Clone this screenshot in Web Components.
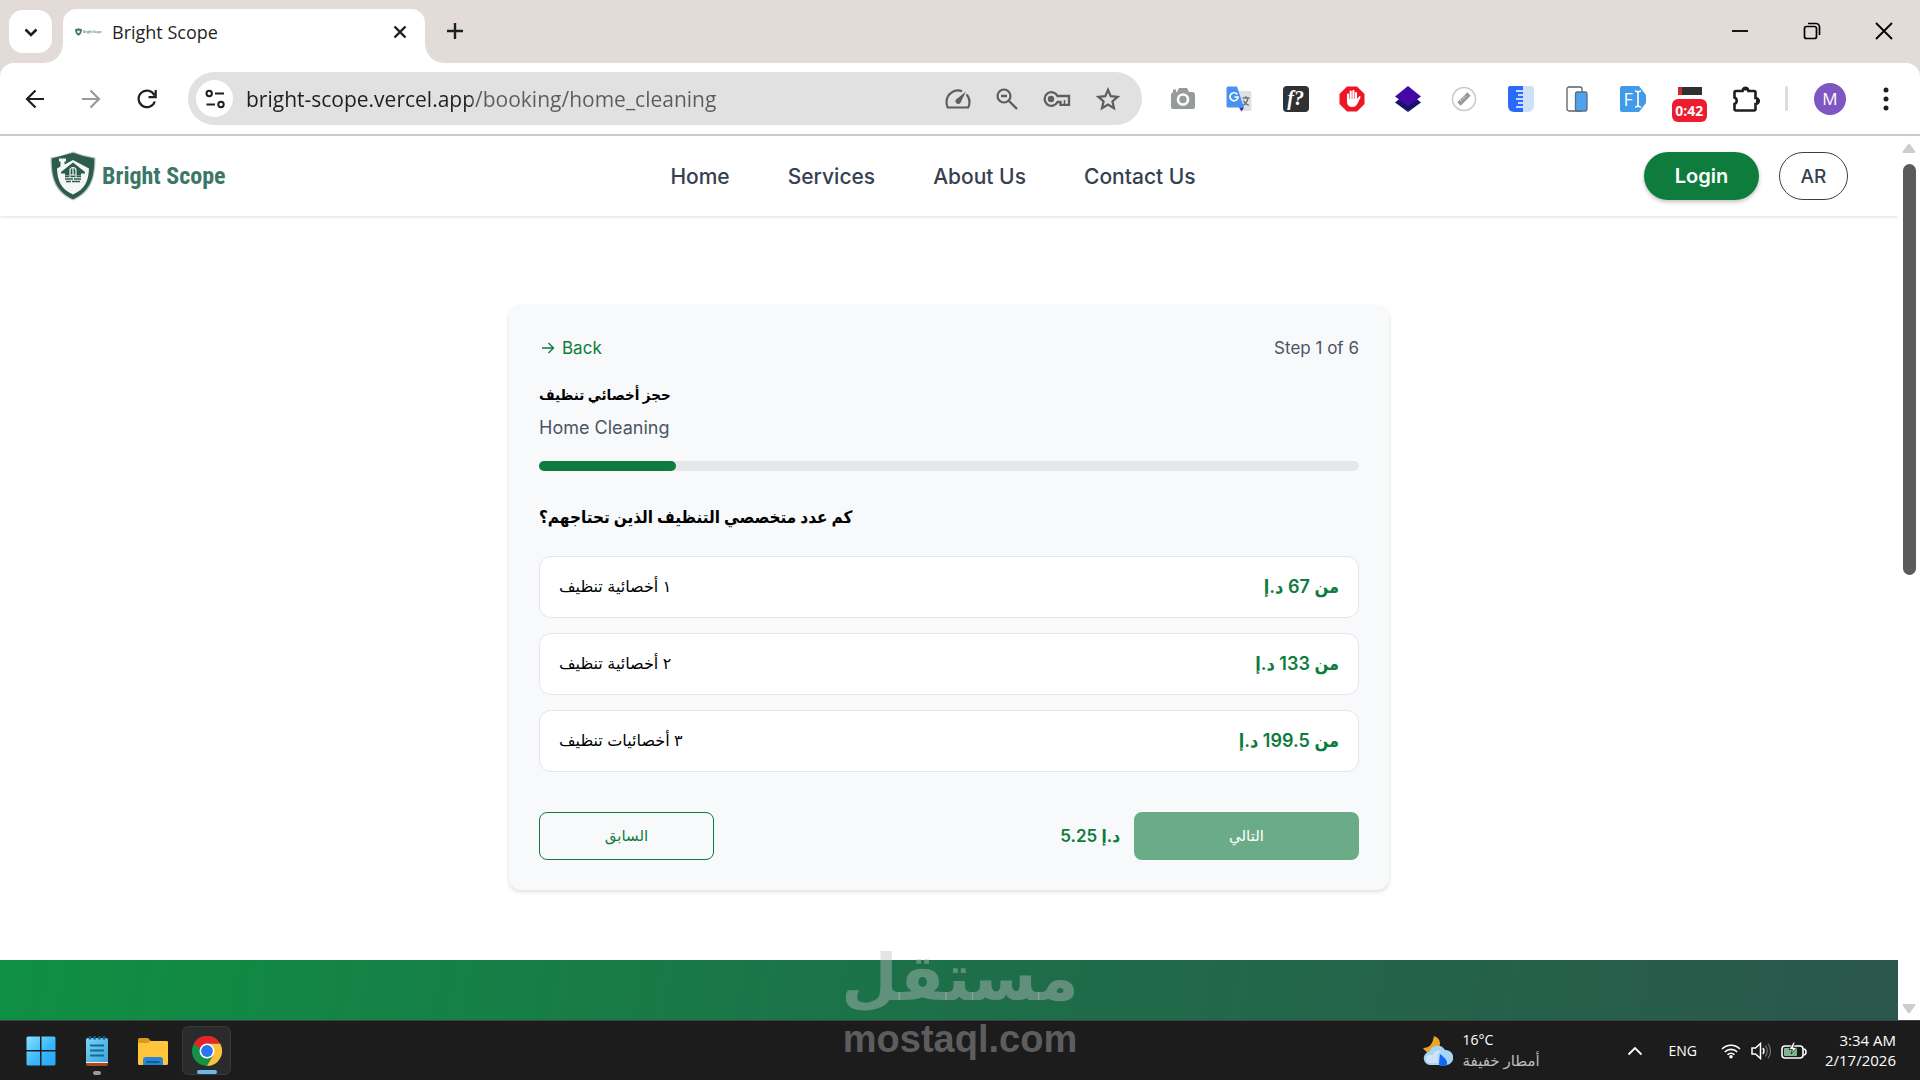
<!DOCTYPE html>
<html lang="en">
<head>
<meta charset="utf-8">
<title>Bright Scope</title>
<style>
  html, body { margin: 0; height: 100%; }
  body {
    --green: #0d7c3d; --ink: #1f1f1f; --frame: #e3dbd8;
    --ui: "Open Sans", "Noto Sans", "DejaVu Sans", sans-serif;
    --site: Inter, "DejaVu Sans", sans-serif;
    --narrow: Inter, "DejaVu Sans Condensed", "DejaVu Sans", sans-serif;
    font-family: var(--site); overflow: hidden; background: #fff;
  }
</style>
</head>
<body>
<desktop-screen></desktop-screen>
<script>
const define = (name, html) => {
  const t = document.createElement('template');
  t.innerHTML = `<style>*{box-sizing:border-box}button,input{font:inherit;color:inherit;margin:0;padding:0;border:0;background:none}button{cursor:pointer}a{color:inherit;text-decoration:none}</style>` + html;
  customElements.define(name, class extends HTMLElement {
    constructor() {
      super();
      this.attachShadow({ mode: 'open' }).append(t.content.cloneNode(true));
    }
  });
};

const ICONS = {
  chevron: ['0 0 20 20', '<path d="M4.500 7.500L10 13l5.500-5.500" fill="none" stroke="currentColor" stroke-width="2.600"/>'],
  close: ['0 0 20 20', '<path d="M4.500 4.500l11 11m0-11l-11 11" stroke="currentColor" stroke-width="2.400"/>'],
  plus: ['0 0 20 20', '<path d="M10 2v16M2 10h16" stroke="currentColor" stroke-width="2.400"/>'],
  min: ['0 0 18 18', '<path d="M1 9h16" stroke="currentColor" stroke-width="1.800"/>'],
  restore: ['0 0 18 18', '<rect x="1.500" y="4.500" width="12" height="12" rx="2" fill="none" stroke="currentColor" stroke-width="1.700"/><path d="M5 1.500h8a3.500 3.500 0 013.500 3.500v8" fill="none" stroke="currentColor" stroke-width="1.700"/>'],
  winclose: ['0 0 18 18', '<path d="M1 1l16 16m0-16L1 17" stroke="currentColor" stroke-width="1.800"/>'],
  back: ['0 0 20 20', '<path d="M19 10H2m8.500-8.500L2 10l8.500 8.500" fill="none" stroke="currentColor" stroke-width="2.200"/>'],
  forward: ['0 0 20 20', '<path d="M1 10h17m-8.500-8.500L18 10l-8.500 8.500" fill="none" stroke="currentColor" stroke-width="2.200"/>'],
  reload: ['0 0 20 20', '<path d="M17.800 12.500A8.300 8.300 0 1117.500 6.500M18.700 1v7.200h-7.200" fill="none" stroke="currentColor" stroke-width="2.200"/>'],
  tune: ['0 0 20 20', '<g fill="none" stroke="currentColor" stroke-width="2"><circle cx="4.200" cy="4.500" r="2.700"/><path d="M10 4.500h9M1.500 15.500h8.500"/><circle cx="16" cy="15.500" r="2.700"/></g>'],
  gauge: ['0 0 26 22', '<path d="M17 3.200A11.500 11.500 0 001.500 14q0 3 1.300 5.500h20.400Q24.500 17 24.500 14q0-4.500-3-7.500" fill="none" stroke="currentColor" stroke-width="2.200"/><path d="M21 3.500l-5.500 11.300a2.800 2.800 0 01-4.700-3z" fill="currentColor"/>'],
  zoomout: ['0 0 22 22', '<circle cx="8" cy="8" r="6.500" fill="none" stroke="currentColor" stroke-width="2.200"/><path d="M5 8h6M13 13l8 8" stroke="currentColor" stroke-width="2.400"/>'],
  key: ['0 0 28 16', '<path d="M14.500 5a6.800 6.800 0 100 6h3v2.800h8.500V5z" fill="none" stroke="currentColor" stroke-width="2.300"/><circle cx="8" cy="8" r="3.200" fill="currentColor"/><path d="M21.500 9v5" stroke="currentColor" stroke-width="1.600"/>'],
  star: ['0 0 24 24', '<path d="M12 2.800l2.700 6.400 6.900.600-5.200 4.500 1.600 6.800-6-3.600-6 3.600 1.600-6.800-5.200-4.500 6.900-.600z" fill="none" stroke="currentColor" stroke-width="2.200"/>'],
  camera: ['0 0 26 24', '<path d="M3 5h4l2-4h8l2 4h3a3 3 0 013 3v12a2 2 0 01-2 2H3a2 2 0 01-2-2V7z" fill="#969b9b"/><circle cx="13" cy="12.500" r="5" fill="none" stroke="#fff" stroke-width="2.600"/><path d="M3 2.500h3v3H3z" fill="#969b9b"/>'],
  translate: ['0 0 26 26', '<path d="M12 5h12a1.500 1.500 0 011.500 1.500v17A1.500 1.500 0 0124 25H16z" fill="#dfe1e4"/><path d="M2 .500h9l7 21H2A1.500 1.500 0 01.500 20V2A1.500 1.500 0 012 .500z" fill="#4b92f0"/><path d="M18 21.500h-5l2.500 4z" fill="#3426c9"/><path d="M11.300 8.500A4 4 0 1012 11H8.500" fill="none" stroke="#fff" stroke-width="1.700"/><path d="M16.500 12h7M20 10v2m2 0q-1 5-5 7.500m.500-5q2 4 5.500 5" fill="none" stroke="#6b7280" stroke-width="1.300"/>'],
  hand: ['0 0 26 26', '<path d="M8 .500h10L25.500 8v10L18 25.500H8L.500 18V8z" fill="#ee1527"/><path d="M9 15V8.500M11.700 13V5.500M14.400 13V5M17 13V7" stroke="#fff" stroke-width="2.100" stroke-linecap="round"/><path d="M8 13h10l2.500-3q1.500 0 1 1.500L18 18.500Q16.500 21 13.500 21C9.500 21 8 18.500 8 15.500z" fill="#fff"/>'],
  layers: ['0 0 28 28', '<path d="M14 7l13 10.500L14 27 1 17.500z" fill="#1a1363"/><path d="M14 1l13 10.500L14 21 1 11.500z" fill="#4508a8"/>'],
  ruler: ['0 0 26 26', '<circle cx="13" cy="13" r="11.500" fill="#fff" stroke="#c6cac9" stroke-width="1.500"/><path d="M8 18l10-10" stroke="#949a98" stroke-width="4.600"/><path d="M9 14l1.500 1.500m0-3L12 14m0-3l1.500 1.500m0-3L15 11" stroke="#fff" stroke-width=".700"/>'],
  scale: ['0 0 26 26', '<path d="M2 0h13v26H6a6 6 0 01-6-6V2a2 2 0 012-2z" fill="#2969fb"/><path d="M15 0h8a3 3 0 013 3v17a6 6 0 01-6 6h-5z" fill="#cfe1f8"/><path d="M8 5h7M10 9h5M8 13h7M10 17h5M8 21h7" stroke="#fff" stroke-width="1.500"/>'],
  device: ['0 0 22 26', '<rect x="1" y="1" width="15" height="24" rx="2" fill="#fff" stroke="#59606b" stroke-width="1.300"/><rect x="9.500" y="6" width="11.500" height="19" rx="2" fill="#4ea2ee" stroke="#596b80" stroke-width="1.300"/>'],
  font: ['0 0 26 26', '<path d="M2 0h17l7 9v8l-7 9H2a2 2 0 01-2-2V2a2 2 0 012-2z" fill="#419bea"/>'],
  puzzle: ['0 0 28 28', '<path d="M4 6h6.500a3 3 0 016 0H22a1.500 1.500 0 011.500 1.500v5.500a3 3 0 010 6v5A1.500 1.500 0 0122 25.500H4A1.500 1.500 0 012.500 24v-5a3.500 3.500 0 000-6.500v-5A1.500 1.500 0 014 6z" fill="none" stroke="currentColor" stroke-width="2.600"/><path d="M10.500 5a3 3 0 016 0zM24.500 13a3 3 0 010 6z" fill="currentColor" stroke="currentColor"/>'],
  dots: ['0 0 6 24', '<g fill="currentColor"><circle cx="3" cy="3" r="2.500"/><circle cx="3" cy="12" r="2.500"/><circle cx="3" cy="21" r="2.500"/></g>'],
  shield: ['0 0 46 50', '<path d="M23 .500Q34 5 45.500 6.500C46 27 41 42 23 49.500 5 42 0 27 .500 6.500 12 5 23 .500 23 .500z" fill="#b9c6c0"/><path d="M23 1.800Q34 6 44.300 7.500C44.500 27 40 40.500 23 48.200 6 40.500 1.500 27 1.700 7.500 12 6 23 1.800z" fill="#2c5c4e"/><path d="M9 7.500h7v3h-1.500v3L23 9l16 8.500C38.500 30 35 38 23 43.500 11 38 7.500 30 7 17.500l3.500-2v-5H9z" fill="#f4f7f5"/><path d="M23 11.500L11 21v1.500h4v2h16v-2h4V21z" fill="#2c5c4e"/><path d="M20 24v-4.500a3 3 0 016 0V24zM23 16.500V24" fill="#2c5c4e" stroke="#f4f7f5" stroke-width="1.200"/><path d="M15 25.500h4.500m1 0h5m1 0H31M15 28h8m1 0h7M16 30.500h5m1 0h8" stroke="#2c5c4e" stroke-width="1.700"/>'],
  arrow: ['0 0 16 16', '<path d="M3 8h11.500M9.500 3L14.500 8l-5 5" fill="none" stroke="currentColor" stroke-width="1.400"/>'],
  up: ['0 0 14 10', '<path d="M7 1.500l5.500 7.500h-11z" fill="#cdcdcd" stroke="#cdcdcd" stroke-width="2" stroke-linejoin="round"/>'],
  down: ['0 0 14 10', '<path d="M7 8.500L12.500 1h-11z" fill="#cdcdcd" stroke="#cdcdcd" stroke-width="2" stroke-linejoin="round"/>'],
  windows: ['0 0 30 30', '<linearGradient id="w" x2="1" y2="1"><stop stop-color="#86e0ff"/><stop offset=".6" stop-color="#35b5fb"/><stop offset="1" stop-color="#2ba4f5"/></linearGradient><path d="M2 .500h12v13.500H.500V2A1.500 1.500 0 012 .500zM15.500 .500H28A1.500 1.500 0 0129.500 2v12h-14zM.500 15.500H14v14H2A1.500 1.500 0 01.500 28zM15.500 15.500h14V28a1.500 1.500 0 01-1.500 1.500H15.500z" fill="url(#w)"/>'],
  notepad: ['0 0 22 30', '<linearGradient id="n" x2="1" y2="1"><stop stop-color="#7bd4f5"/><stop offset="1" stop-color="#3ba3dd"/></linearGradient><path d="M0 25h22v3a2 2 0 01-2 2H2a2 2 0 01-2-2z" fill="#a84a18"/><path d="M0 24h22v3H0z" fill="#f3efe9"/><path d="M1.500 2h19A1.500 1.500 0 0122 3.500V26H0V3.500A1.500 1.500 0 011.500 2z" fill="url(#n)"/><path d="M4 9.500h14M4 14.500h14M4 19.500h14" stroke="#0d6f92" stroke-width="2.200"/><path d="M4 0v3.500M8.700 0v3.500M13.400 0v3.500M18 0v3.500" stroke="#125c84" stroke-width="2.400"/>'],
  folder: ['0 0 30 28', '<path d="M1.500 1H10l3 3h15.500A1.500 1.500 0 0130 5.500V15H0V2.500A1.500 1.500 0 011.500 1z" fill="#dd9720"/><path d="M0 6h10l3-2h15.500A1.500 1.500 0 0130 5.500v21a1.500 1.500 0 01-1.500 1.500h-27A1.500 1.500 0 010 26.500z" fill="#ffc63b"/><path d="M5 28v-5a3 3 0 013-3h14a3 3 0 013 3v5z" fill="#2587d1"/><path d="M8.500 24h13v2h-13z" fill="#1159a2"/>'],
  chrome: ['0 0 30 30', '<circle cx="15" cy="15" r="15" fill="#159246"/><path d="M2 7.500A15 15 0 0128 7.500H15L9 18z" fill="#e52527"/><path d="M28 7.500A15 15 0 0115 30l6.500-11.300L15 7.500z" fill="#fdc23c"/><path d="M2 7.500l6.500 11.200L15 15z" fill="#159246"/><path d="M2 7.500A15 15 0 0128 7.500H15a7.500 7.500 0 00-7 5z" fill="#e52527"/><circle cx="15" cy="15" r="7.500" fill="#fff"/><circle cx="15" cy="15" r="5.900" fill="#2b76f0"/>'],
  weather: ['0 0 30 30', '<path d="M11 0q8 3 5.500 11L8 17Q3 17 0 12q9 1 11-12z" fill="#eda327"/><path d="M7 29a6.800 6.800 0 01-.500-13.500A8.500 8.500 0 0122 14a7.500 7.500 0 011.500 15z" fill="#a7d3f5"/><path d="M6 27q-4-2-3-6 2-3 7-2 2-6 8-4-4 1-3 12z" fill="#cbe4f8"/><path d="M17 18q7 5 7 9a4 4 0 01-8 0z" fill="#1468ef"/>'],
  caret: ['0 0 16 10', '<path d="M1.500 8.500L8 2l6.500 6.500" fill="none" stroke="#fff" stroke-width="1.800"/>'],
  wifi: ['0 0 20 16', '<g fill="none" stroke="#fff" stroke-width="1.600"><path d="M1 6a12.700 12.700 0 0118 0M3.800 9a8.700 8.700 0 0112.400 0M6.500 11.800a5 5 0 017 0"/></g><circle cx="10" cy="13.800" r="1.800" fill="#fff"/>'],
  volume: ['0 0 20 18', '<path d="M1 6h3.500L9.500 1.500v15L4.500 12H1z" fill="none" stroke="#fff" stroke-width="1.500"/><path d="M12 6q2 3 0 6" fill="none" stroke="#fff" stroke-width="1.500"/><path d="M14.300 3.500q4 5.500 0 11M17 1.500q5 7.500 0 15" fill="none" stroke="#6b6b6b" stroke-width="1.300"/>'],
  battery: ['0 0 26 18', '<rect x="1" y="4" width="21" height="12" rx="3" fill="none" stroke="#fff" stroke-width="1.600"/><path d="M22.500 7Q25 7 25 10t-2.500 3" fill="none" stroke="#fff" stroke-width="1.500"/><rect x="3" y="6" width="13" height="8" rx="1" fill="#7fb491"/><path d="M12.500 0L8 7.500h3.500L10 12l6-6.500h-3.500L14 0z" fill="#fff" stroke="#1c1c1c" stroke-width=".800"/>'],
};
/* <ui-icon name="..."> : one glyph of the set above */
customElements.define('ui-icon', class extends HTMLElement {
  constructor() { super(); this.attachShadow({ mode: 'open' }); }
  connectedCallback() {
    const [box, body] = ICONS[this.getAttribute('name')];
    const [, , w, h] = box.split(' ');
    this.shadowRoot.innerHTML = `<style>:host{display:block;flex:none;width:${w}px;height:${h}px}svg{display:block}</style><svg viewBox="${box}" width="${w}" height="${h}" aria-hidden="true">${body}</svg>`;
  }
});

define('tab-strip', `<style>
  :host{display:flex;align-items:flex-end;height:63px;background:var(--frame);padding-left:9px;color:var(--ink);font-family:var(--ui)}
  .search{width:43px;height:43px;margin:0 11px 10px 0;border-radius:14px;background:#fff;display:grid;place-items:center}
  .tab{position:relative;display:flex;align-items:center;width:362px;height:54px;padding:0 15px 9px 12px;border-radius:14px 14px 0 0;background:#fff;font-size:18px}
  .tab::before,.tab::after{content:"";position:absolute;bottom:0;width:18px;height:18px}
  .tab::before{left:-18px;background:radial-gradient(circle at 0 0,transparent 17px,#fff 18px)}
  .tab::after{right:-18px;background:radial-gradient(circle at 100% 0,transparent 17px,#fff 18px)}
  .fav{display:flex;align-items:center;width:37px;color:#6d978b;font-size:3px;white-space:nowrap;font-weight:700}
  .fav svg{width:7px;height:8px;margin-right:1px}
  .title{flex:1}
  .plus{margin:0 auto 22px 20px}
  .win{display:flex;gap:54px;margin:0 27px 23px 0;color:#000}
</style>
<button class="search" aria-label="Search tabs"><ui-icon name="chevron"></ui-icon></button>
<div class="tab"><span class="fav"><svg viewBox="0 0 46 50"><path d="M23 0L46 7Q46 38 23 50 0 38 0 7z" fill="#47776a"/><circle cx="23" cy="24" r="9" fill="#dfe"/></svg>Bright Scope</span>
<span class="title">Bright Scope</span><button aria-label="Close tab"><ui-icon name="close"></ui-icon></button></div>
<button class="plus" aria-label="New tab"><ui-icon name="plus"></ui-icon></button>
<div class="win"><button aria-label="Minimize"><ui-icon name="min"></ui-icon></button><button aria-label="Restore"><ui-icon name="restore"></ui-icon></button><button aria-label="Close window"><ui-icon name="winclose"></ui-icon></button></div>`);

define('browser-toolbar', `<style>
  :host{display:block;background:var(--frame);color:var(--ink);font-family:var(--ui)}
  .bar{display:flex;align-items:center;height:73px;padding:0 31px 0 25px;background:#fff;border-radius:14px 14px 0 0;border-bottom:2px solid #cbcbcb}
  .nav{display:flex;gap:36px;margin-right:31px}
  .off{color:#9a9a9a}
  .omni{flex:1;display:flex;align-items:center;height:53px;padding:0 22px 0 8px;border-radius:27px;background:#e1e1e1;color:#5b5f60}
  .info{width:37px;height:37px;border-radius:50%;background:#fff;color:var(--ink);display:grid;place-items:center;margin-right:13px}
  input{flex:1;min-width:0;height:34px;font-size:21px;outline:0;color:transparent;background:linear-gradient(90deg,#1f1f1f 226px,#5a5d60 226px);-webkit-background-clip:text;background-clip:text}
  .acts{display:flex;gap:25px;align-items:center}
  .ext{display:flex;justify-content:space-between;width:603px;margin:0 19px 0 21px}
  .ext button{width:40px;height:44px;display:grid;place-items:center;position:relative}
  .fx span{width:26px;height:26px;border-radius:4px;background:#2f3133;color:#fff;font:italic 700 20px/24px "Liberation Serif",serif}
  .fi span{position:absolute;left:10px;color:#fff;font:500 18px/26px var(--ui)}
  .fi svg{position:absolute;left:21px}
  .timer i{position:absolute;top:10px;left:8px;width:24px;height:8px;background:#303030;border-left:4px solid #d92626}
  .timer span{position:absolute;top:22px;left:2px;width:35px;height:23px;border-radius:6px;background:#ee1c2e;color:#fff;font:700 14px/23px var(--ui)}
  .sep{width:3px;height:25px;border-radius:2px;background:var(--frame)}
  .me{width:32px;height:32px;border-radius:50%;background:#7e57c2;color:#fff;font-size:17px;margin:0 37px 0 26px}
</style>
<div class="bar">
 <div class="nav"><button aria-label="Back"><ui-icon name="back"></ui-icon></button><button class="off" aria-label="Forward" disabled><ui-icon name="forward"></ui-icon></button><button aria-label="Reload"><ui-icon name="reload"></ui-icon></button></div>
 <div class="omni"><button class="info" aria-label="Site information"><ui-icon name="tune"></ui-icon></button>
  <input aria-label="Address" value="bright-scope.vercel.app/booking/home_cleaning" spellcheck="false">
  <div class="acts"><ui-icon name="gauge"></ui-icon><ui-icon name="zoomout"></ui-icon><ui-icon name="key"></ui-icon><ui-icon name="star"></ui-icon></div></div>
 <div class="ext">
  <button aria-label="Screenshot"><ui-icon name="camera"></ui-icon></button><button aria-label="Translate"><ui-icon name="translate"></ui-icon></button>
  <button class="fx"><span>f?</span></button>
  <button aria-label="Blocker"><ui-icon name="hand"></ui-icon></button><button aria-label="Layers"><ui-icon name="layers"></ui-icon></button><button aria-label="Measure"><ui-icon name="ruler"></ui-icon></button><button aria-label="Ruler"><ui-icon name="scale"></ui-icon></button><button aria-label="Devices"><ui-icon name="device"></ui-icon></button>
  <button class="fi"><ui-icon name="font"></ui-icon><span>F</span><svg width="8" height="18" viewBox="0 0 8 18"><path d="M1 1q3 0 3 2v12q0 2-3 2M7 1Q4 1 4 3v12q0 2 3 2" fill="none" stroke="#fff" stroke-width="1.600"/></svg></button>
  <button class="timer"><i></i><span>0:42</span></button>
  <button aria-label="Extensions"><ui-icon name="puzzle"></ui-icon></button>
 </div>
 <span class="sep"></span><button class="me">M</button><button aria-label="Menu"><ui-icon name="dots"></ui-icon></button>
</div>`);

define('site-header', `<style>
  :host{display:flex;justify-content:space-between;align-items:center;height:80px;padding:0 50px;background:#fff;box-shadow:0 1px 3px rgba(0,0,0,.13);color:#364150;font-weight:500;font-size:20px}
  .logo{display:flex;align-items:center;gap:6px;width:172px;color:#3b7766;font:700 24px/40px "Liberation Sans Narrow","Roboto Condensed","Liberation Sans",sans-serif;white-space:nowrap}
  nav{display:flex;gap:58px;font-size:21px}
  .act{display:flex;gap:20px}
  .act button{height:48px;border-radius:24px}
  .login{width:115px;background:var(--green);color:#fff;font-weight:600;box-shadow:0 2px 4px rgba(0,0,0,.25)}
  .act .lang{width:69px;border:1px solid #364150;font-size:19px}
</style>
<a class="logo" href="#"><ui-icon name="shield"></ui-icon><span>Bright Scope</span></a>
<nav><a href="#">Home</a><a href="#">Services</a><a href="#">About Us</a><a href="#">Contact Us</a></nav>
<div class="act"><button class="login">Login</button><button class="lang">AR</button></div>`);

define('step-progress', `<style>
  :host{display:block;height:10px;border-radius:5px;background:#e5e7ea}
  div{width:calc(100%/6);height:100%;border-radius:5px;background:var(--green)}
</style><div role="progressbar" aria-label="Booking progress" aria-valuemin="0" aria-valuemax="6" aria-valuenow="1"></div>`);

define('booking-option', `<style>
  :host{display:block}
  button{display:flex;justify-content:space-between;align-items:center;width:100%;height:62px;padding:0 19px 2px;border:1px solid #e3e6ea;border-radius:12px;background:#fff;color:#000;font-size:16px;text-align:left}
  .price{color:var(--green);font:600 18px var(--narrow)}
</style><button><span dir="rtl"><slot></slot></span><span class="price" dir="rtl"><slot name="price"></slot></span></button>`);

define('booking-card', `<style>
  :host{display:block;width:100%;max-width:880px;padding:30px;border-radius:12px;background:#f8f9fb;box-shadow:0 2px 4px rgba(0,0,0,.13);color:#000}
  .row,.foot{display:flex;justify-content:space-between;align-items:center}
  .row{font-size:17px;line-height:26px;color:#4b5563}
  .back{display:flex;align-items:center;gap:7px;color:var(--green)}
  h1{margin:20px 0 4px;font-size:15px;line-height:28px;padding-bottom:2px}
  .sub{margin:0 0 20px;font-size:18px;line-height:26px;color:#4b5563}
  h2{margin:30px 0 20px;font-size:17px;line-height:33px;padding-bottom:2px}
  h1,h2{font-family:var(--narrow);font-weight:700;text-align:left}
  .list{display:grid;gap:15px;margin-bottom:40px}
  .foot button{height:48px;padding-bottom:2px;border-radius:8px;font-size:15px}
  .prev{width:175px;border:1px solid var(--green);color:var(--green)}
  .go{display:flex;align-items:center;gap:14px;color:var(--green);font:600 17px var(--narrow)}
  .go .next{width:225px;background:#6bac88;color:#fff;font-weight:400;font-family:var(--site)}
</style>
<div class="row"><a class="back" href="#"><ui-icon name="arrow"></ui-icon>Back</a><span>Step 1 of 6</span></div>
<h1><span dir="rtl">حجز أخصائي تنظيف</span></h1>
<p class="sub">Home Cleaning</p>
<step-progress></step-progress>
<h2><span dir="rtl">كم عدد متخصصي التنظيف الذين تحتاجهم؟</span></h2>
<div class="list">
 <booking-option>١ أخصائية تنظيف<span slot="price">من 67 د.إ</span></booking-option>
 <booking-option>٢ أخصائية تنظيف<span slot="price">من 133 د.إ</span></booking-option>
 <booking-option>٣ أخصائيات تنظيف<span slot="price">من 199.5 د.إ</span></booking-option>
</div>
<div class="foot"><button class="prev">السابق</button><div class="go"><span dir="rtl">د.إ 5.25</span><button class="next">التالي</button></div></div>`);

define('scroll-track', `<style>
  :host{display:flex;flex-direction:column;align-items:center;width:22px;padding:7px 0 6px;background:#fff}
  .track{flex:1;margin:11px 0 10px}
  i{display:block;width:13px;height:49.5%;border-radius:7px;background:#5b5b5b}
</style><ui-icon name="up"></ui-icon><div class="track"><i></i></div><ui-icon name="down"></ui-icon>`);

define('web-page', `<style>
  :host{display:flex;min-height:0}
  .view{flex:1;overflow:hidden;display:flex;flex-direction:column}
  main{display:flex;justify-content:center;padding:89px 20px 70px}
  footer{flex:1;background:linear-gradient(100deg,#0f9043,#1d6f49 50%,#2b564b)}
</style><div class="view"><site-header></site-header><main><booking-card></booking-card></main><footer></footer></div><scroll-track></scroll-track>`);

define('task-bar', `<style>
  :host{display:flex;align-items:center;height:60px;padding:0 24px 0 26px;background:#1c1c1c;border-top:1px solid #3f4142;color:#fff;font:14px/20px var(--ui)}
  .apps{display:flex;align-items:center;gap:30px;flex:1}
  .apps button{position:relative;display:grid;place-items:center}
  .apps button.run::after{content:"";position:absolute;bottom:-9px;width:8px;height:4px;border-radius:2px;background:#9a9a9a}
  .apps .on{width:49px;height:49px;border-radius:6px;background:#2a2b2c;border:1px solid #37393a;margin-left:-16px}
  .apps button.on::after{bottom:0;width:20px;background:#6fb9ea}
  .wx{display:flex;align-items:center;gap:10px;width:204px;text-align:left}
  .wx em{display:block;font-style:normal;color:#bdbdbd;font-size:15px}
  .lang{margin:0 24px 0 26px}
  .tray{display:flex;align-items:center;gap:10px;width:85px}
  .clock{width:90px;font-size:15px;text-align:right;white-space:nowrap}
  .wx span,.clock{padding-bottom:2px}
</style>
<div class="apps"><button aria-label="Start"><ui-icon name="windows"></ui-icon></button><button class="run" aria-label="Notepad"><ui-icon name="notepad"></ui-icon></button><button aria-label="Files"><ui-icon name="folder"></ui-icon></button><button class="on run" aria-label="Chrome"><ui-icon name="chrome"></ui-icon></button></div>
<button class="wx"><ui-icon name="weather"></ui-icon><span>16°C<em dir="rtl">أمطار خفيفة</em></span></button>
<button aria-label="Hidden icons"><ui-icon name="caret"></ui-icon></button><button class="lang">ENG</button>
<div class="tray"><ui-icon name="wifi"></ui-icon><ui-icon name="volume"></ui-icon><ui-icon name="battery"></ui-icon></div>
<div class="clock">3:34 AM<br>2/17/2026</div>`);

define('water-mark', `<style>
  :host{position:absolute;left:50%;bottom:18px;transform:translateX(-50%);display:flex;flex-direction:column;align-items:center;color:rgba(190,190,194,.42);pointer-events:none;white-space:nowrap}
  b{font:700 65px/76px "DejaVu Sans",sans-serif}
  span{font:700 38px/46px "Liberation Sans",sans-serif}
</style><b dir="rtl">مستقل</b><span>mostaql.com</span>`);

define('desktop-screen', `<style>
  :host{position:relative;display:flex;flex-direction:column;height:100vh}
  web-page{flex:1}
</style><tab-strip></tab-strip><browser-toolbar></browser-toolbar><web-page></web-page><task-bar></task-bar><water-mark></water-mark>`);
</script>
</body>
</html>
